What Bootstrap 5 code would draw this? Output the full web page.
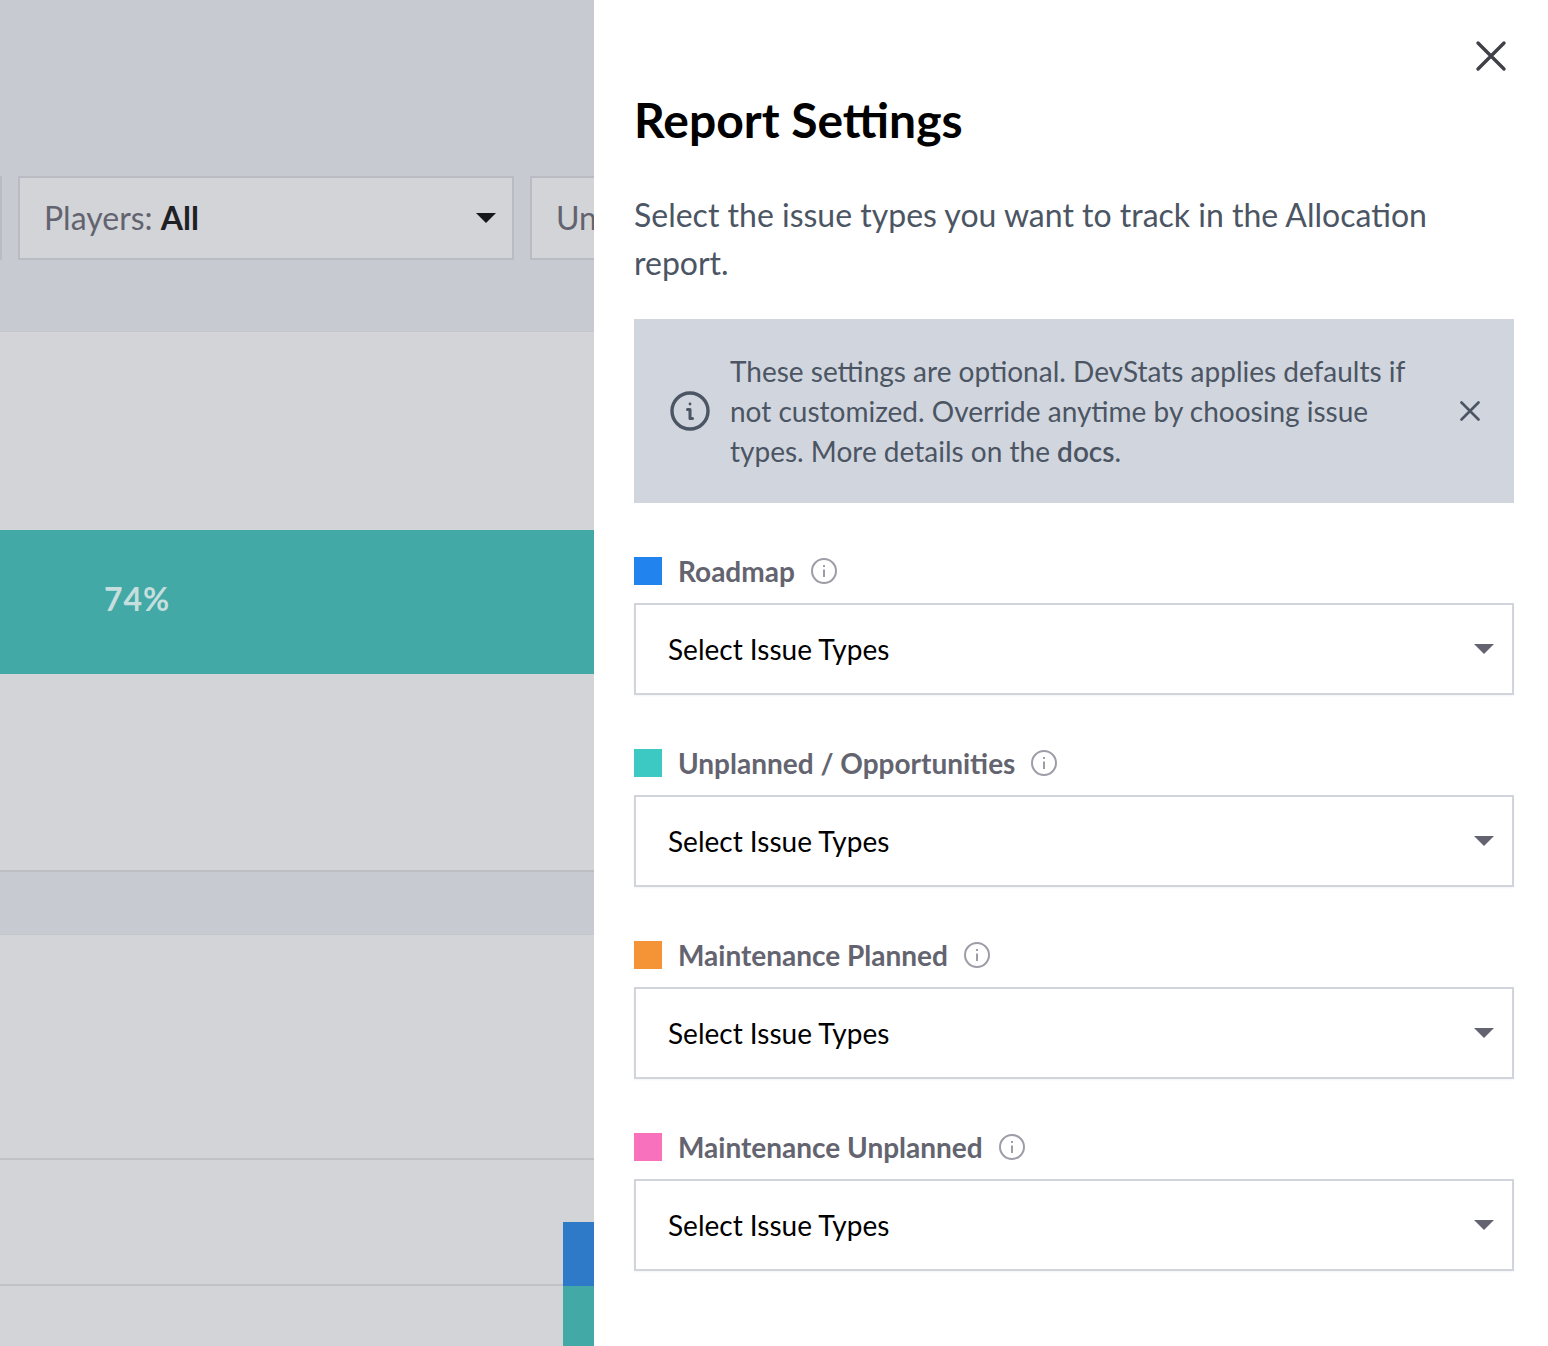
<!DOCTYPE html>
<html lang="en">

<head>
    <meta charset="UTF-8">
    <meta name="viewport" content="width=device-width, initial-scale=1.0">
    <title>Report Settings</title>
    <link href="https://cdn.jsdelivr.net/npm/bootstrap@5.3.1/dist/css/bootstrap.min.css" rel="stylesheet">
    <style>
        html, body { height: 100%; }
        body { font-family: "Lato", "Noto Sans", sans-serif; overflow: hidden; background: #fff; }
        .page-shell { width: 1548px; height: 1346px; }

        /* dimmed report behind the drawer */
        .report-side { width: 594px; height: 1346px; background: #c7cad0; overflow: hidden; }
        .filter-area { height: 332px; padding-top: 176px; border-bottom: 1px solid #c3c6cb; }
        .filter-box { height: 84px; flex: 0 0 auto; background: #d2d4d8; border: 2px solid #b9bcc3; padding: 0 16px 0 24px; font-size: 32px; color: #62636f; white-space: nowrap; }
        .filter-edge { width: 1px; flex: 0 0 1px; padding: 0; border-width: 0 2px 0 0; margin-right: 16px; }
        .filter-players { width: 496px; margin-right: 16px; }
        .filter-cut { width: 200px; }
        .filter-box b { color: #1f2024; font-weight: 700; }
        .caret-dark { width: 0; height: 0; border-left: 10px solid transparent; border-right: 10px solid transparent; border-top: 10px solid #17171b; }
        .panel-top { height: 540px; background: #d2d4d8; padding-top: 198px; border-bottom: 2px solid #bcbec2; }
        .teal-band { height: 144px; background: #42a9a6; color: #c6dedd; font-size: 32px; font-weight: 700; padding: 50px 0 0 104px; line-height: 38px; letter-spacing: 1px; }
        .panel-gap { height: 62px; }
        .panel-bottom { height: 412px; background: #d2d4d8; border-top: 1px solid #c3c6cb; }
        .grid-one { height: 225px; border-bottom: 2px solid #c0c2c6; }
        .grid-two { height: 126px; }
        .grid-two .grid-line { border-bottom: 2px solid #c0c2c6; }
        .bar-blue { width: 31px; height: 64px; background: #2f79c9; }
        .bar-teal { width: 31px; height: 60px; background: #42a9a6; }

        /* drawer */
        .drawer { width: 954px; height: 1346px; padding: 0 34px 0 40px; background: #fff; }
        .drawer-close { height: 96px; padding: 40px 7px 0 0; }
        .drawer-title { font-size: 48px; line-height: 48px; font-weight: 700; color: #000; margin: 0 0 47px; }
        .drawer-intro { font-size: 32px; line-height: 48px; color: #4b5563; margin: 0 0 32px; }
        .note-box { height: 184px; background: #d1d5de; color: #4b5563; font-size: 28px; line-height: 40px; padding: 0 34px 0 36px; margin-bottom: 54px; }
        .note-box b { font-weight: 600; }
        .note-text { width: 712px; margin: 0 18px 0 20px; }
        .field-label { height: 28px; margin-bottom: 18px; font-size: 28px; font-weight: 700; color: #63646f; line-height: 28px; }
        .swatch { width: 28px; height: 28px; }
        .pick-box { height: 92px; border: 2px solid #d1d5db; padding: 0 18px 0 32px; margin-bottom: 54px; font-size: 28px; color: #000; box-shadow: 0 1px 2px rgba(0, 0, 0, .05); }
        .caret-grey { width: 0; height: 0; border-left: 10px solid transparent; border-right: 10px solid transparent; border-top: 10px solid #63646f; }
    </style>
</head>

<body>
    <div class="page-shell d-flex">
        <!-- Report behind the drawer -->
        <div class="report-side flex-shrink-0">
            <div class="filter-area d-flex">
                <div class="filter-box filter-edge"></div>
                <div class="filter-box filter-players d-flex align-items-center justify-content-between">
                    <span>Players: <b>All</b></span>
                    <span class="caret-dark"></span>
                </div>
                <div class="filter-box filter-cut d-flex align-items-center">Unplanned</div>
            </div>
            <div class="panel-top">
                <div class="teal-band">74%</div>
            </div>
            <div class="panel-gap"></div>
            <div class="panel-bottom">
                <div class="grid-one"></div>
                <div class="grid-two d-flex align-items-end">
                    <div class="grid-line flex-grow-1 h-100"></div>
                    <div class="bar-blue"></div>
                </div>
                <div class="d-flex justify-content-end">
                    <div class="bar-teal"></div>
                </div>
            </div>
        </div>

        <!-- Report settings drawer -->
        <div class="drawer flex-shrink-0">
            <div class="drawer-close d-flex justify-content-end">
                <svg width="32" height="32" viewBox="0 0 32 32" fill="none" stroke="#3f4147" stroke-width="3.4" stroke-linecap="round"><path d="M3 3 29 29M29 3 3 29"/></svg>
            </div>
            <h1 class="drawer-title">Report Settings</h1>
            <p class="drawer-intro">Select the issue types you want to track in the Allocation report.</p>

            <div class="note-box d-flex align-items-center">
                <svg class="flex-shrink-0" width="40" height="40" viewBox="0 0 40 40" fill="none" stroke="#4b5563" stroke-width="3.4"><circle cx="20" cy="20" r="18"/><circle cx="20" cy="13" r="1.4" fill="#4b5563" stroke="none"/><path d="M17.5 18.5H20V27.5H22.5" stroke-width="3" stroke-linecap="round" stroke-linejoin="round"/></svg>
                <div class="note-text">These settings are optional. DevStats applies defaults if not customized. Override anytime by choosing issue types. More details on the <b>docs</b>.</div>
                <svg class="flex-shrink-0" width="20" height="20" viewBox="0 0 20 20" fill="none" stroke="#4b5563" stroke-width="2.6" stroke-linecap="round"><path d="M1.5 1.5 18.5 18.5M18.5 1.5 1.5 18.5"/></svg>
            </div>

            <div class="field-label d-flex align-items-center gap-3">
                <span class="swatch" style="background:#2183ee"></span>
                <span class="d-flex align-items-center gap-3 field-name">Roadmap
                    <svg width="26" height="26" viewBox="0 0 26 26" fill="none" stroke="#9c9da6" stroke-width="2"><circle cx="13" cy="13" r="12"/><path d="M13 11.5V19M13 7V9"/></svg>
                </span>
            </div>
            <div class="pick-box d-flex align-items-center justify-content-between"><span>Select Issue Types</span><span class="caret-grey"></span></div>

            <div class="field-label d-flex align-items-center gap-3">
                <span class="swatch" style="background:#3cc9c3"></span>
                <span class="d-flex align-items-center gap-3 field-name">Unplanned / Opportunities
                    <svg width="26" height="26" viewBox="0 0 26 26" fill="none" stroke="#9c9da6" stroke-width="2"><circle cx="13" cy="13" r="12"/><path d="M13 11.5V19M13 7V9"/></svg>
                </span>
            </div>
            <div class="pick-box d-flex align-items-center justify-content-between"><span>Select Issue Types</span><span class="caret-grey"></span></div>

            <div class="field-label d-flex align-items-center gap-3">
                <span class="swatch" style="background:#f59337"></span>
                <span class="d-flex align-items-center gap-3 field-name">Maintenance Planned
                    <svg width="26" height="26" viewBox="0 0 26 26" fill="none" stroke="#9c9da6" stroke-width="2"><circle cx="13" cy="13" r="12"/><path d="M13 11.5V19M13 7V9"/></svg>
                </span>
            </div>
            <div class="pick-box d-flex align-items-center justify-content-between"><span>Select Issue Types</span><span class="caret-grey"></span></div>

            <div class="field-label d-flex align-items-center gap-3">
                <span class="swatch" style="background:#f871bd"></span>
                <span class="d-flex align-items-center gap-3 field-name">Maintenance Unplanned
                    <svg width="26" height="26" viewBox="0 0 26 26" fill="none" stroke="#9c9da6" stroke-width="2"><circle cx="13" cy="13" r="12"/><path d="M13 11.5V19M13 7V9"/></svg>
                </span>
            </div>
            <div class="pick-box d-flex align-items-center justify-content-between"><span>Select Issue Types</span><span class="caret-grey"></span></div>
        </div>
    </div>

    <script src="https://cdn.jsdelivr.net/npm/bootstrap@5.3.1/dist/js/bootstrap.bundle.min.js"></script>
</body>

</html>
